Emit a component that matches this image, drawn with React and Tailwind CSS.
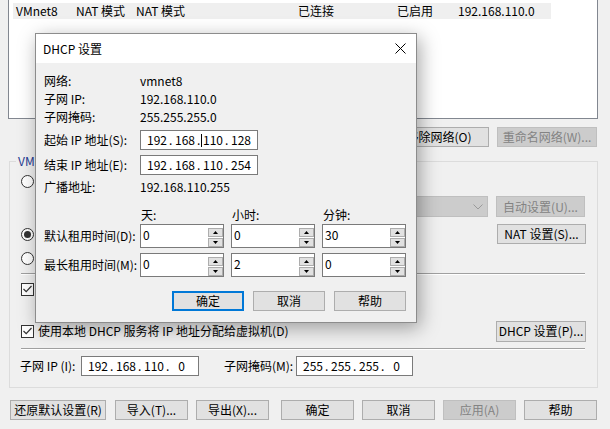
import React from "react";

function Btn({ children, className = "", disabled = false, def = false }) {
  const look = disabled
    ? "bg-[#cccccc] border border-[#bfbfbf] text-[#838383]"
    : def
    ? "bg-[#e1e1e1] border-2 border-[#0078d7]"
    : "bg-[#e1e1e1] border border-[#adadad]";
  return (
    <div className={`flex items-center justify-center h-[20px] shrink-0 whitespace-nowrap overflow-hidden ${look} ${className}`}>
      {children}
    </div>
  );
}

function IpField({ parts, className = "", caretAfter = -1 }) {
  return (
    <div className={`flex items-center h-[20px] shrink-0 bg-white border border-[#7a7a7a] pl-[6px] ${className}`}>
      {parts.map((p, i) => (
        <React.Fragment key={i}>
          <span className="w-[19px] shrink-0 text-center">{p}</span>
          {i < 3 && (
            <span className="w-[9px] shrink-0 flex items-center pl-[3px]">
              <span>.</span>
              {caretAfter === i && <span className="ml-[1px] w-px h-[13px] bg-black" />}
            </span>
          )}
        </React.Fragment>
      ))}
    </div>
  );
}

function Arrow({ up }) {
  return (
    <svg width="5" height="3" viewBox="0 0 5 3">
      <polygon points={up ? "0,3 5,3 2.5,0" : "0,0 5,0 2.5,3"} fill="#000" />
    </svg>
  );
}

function Spin({ v }) {
  return (
    <div className="flex shrink-0 w-[84px] h-[24px] border border-[#7a7a7a] bg-white">
      <div className="w-[67px] pl-[2px] pt-[2px] leading-[16px]">{v}</div>
      <div className="flex flex-col justify-end gap-[1px] w-[15px]">
        <div className="h-[9px] w-[15px] bg-[#e1e1e1] border border-[#adadad] flex items-center justify-center">
          <Arrow up />
        </div>
        <div className="h-[9px] w-[15px] bg-[#e1e1e1] border border-[#adadad] flex items-center justify-center">
          <Arrow />
        </div>
      </div>
    </div>
  );
}

function Radio({ checked = false }) {
  return (
    <div className="w-[13px] h-[13px] rounded-full border border-[#333333] bg-white flex items-center justify-center shrink-0">
      {checked && <div className="w-[7px] h-[7px] rounded-full bg-[#333333]" />}
    </div>
  );
}

function Check() {
  return (
    <div className="w-[13px] h-[13px] border border-[#333333] bg-white flex items-center justify-center shrink-0">
      <svg width="9" height="8" viewBox="0 0 9 8">
        <polyline points="0.5,4 3.2,6.7 8.5,1" fill="none" stroke="#333333" strokeWidth="1.2" />
      </svg>
    </div>
  );
}

function Etched({ className = "" }) {
  return (
    <div className={`h-[2px] flex flex-col ${className}`}>
      <div className="h-px bg-[#a0a0a0]" />
      <div className="h-px bg-white" />
    </div>
  );
}

export default function App() {
  return (
    <div className="relative w-[610px] h-[429px] overflow-hidden bg-[#f0f0f0] text-[12px] leading-[16px] text-black font-['Noto_Sans_CJK_SC',sans-serif]">
      {/* list box */}
      <div className="ml-[8px] w-[590px] h-[119px] bg-white border-x border-b border-[#828790] pt-[3px] pl-[4px]">
        <div className="w-[538px] h-[16px] bg-[#efefef] flex items-center pl-[3px] whitespace-nowrap">
          <span className="w-[60px]">VMnet8</span>
          <span className="w-[60px]">NAT 模式</span>
          <span className="w-[162px]">NAT 模式</span>
          <span className="w-[99px]">已连接</span>
          <span className="w-[61px]">已启用</span>
          <span>192.168.110.0</span>
        </div>
      </div>

      {/* list buttons */}
      <div className="mt-[8px] flex justify-end gap-[8px] pr-[13px]">
        <Btn className="w-[100px]">移除网络(O)</Btn>
        <Btn className="w-[100px]" disabled>重命名网络(W)...</Btn>
      </div>

      {/* group box */}
      <div className="relative mt-[14px] ml-[9px] w-[589px] h-[227px] border border-[#dcdcdc] pl-[11px] pr-[11px] pt-[9px]">
        <div className="absolute left-[6px] top-[-9px] w-[22px] overflow-hidden whitespace-nowrap px-[2px] bg-[#f0f0f0] text-[#1f3a93]">VMnet</div>

        <div className="h-[20px] flex items-center">
          <Radio />
        </div>

        <div className="mt-[5px] h-[21px] flex items-center">
          <div className="w-[97px] shrink-0" />
          <div className="w-[370px] shrink-0 h-[21px] bg-[#cccccc] border border-[#bfbfbf] flex items-center justify-end pr-[4px]">
            <svg width="10" height="6" viewBox="0 0 10 6">
              <polyline points="0.5,0.5 5,5 9.5,0.5" fill="none" stroke="#9a9a9a" strokeWidth="1" />
            </svg>
          </div>
          <Btn disabled className="ml-[8px] w-[89px] h-[21px]">自动设置(U)...</Btn>
        </div>

        <div className="mt-[7px] h-[20px] flex items-center">
          <Radio checked />
          <div className="flex-1" />
          <Btn className="w-[89px]">NAT 设置(S)...</Btn>
        </div>

        <div className="mt-[4px] h-[20px] flex items-center">
          <Radio />
        </div>

        <Etched className="mt-[5px] mr-[1px]" />

        <div className="mt-[4px] h-[20px] flex items-center">
          <Check />
        </div>

        <div className="h-[22px]" />

        <div className="h-[20px] flex items-center whitespace-nowrap">
          <Check />
          <span className="ml-[4px]">使用本地 DHCP 服务将 IP 地址分配给虚拟机(D)</span>
          <div className="flex-1" />
          <Btn className="w-[90px] h-[21px]">DHCP 设置(P)...</Btn>
        </div>

        <Etched className="mt-[7px] mr-[1px]" />

        <div className="mt-[6px] h-[20px] flex items-center whitespace-nowrap">
          <span className="-ml-[1px] w-[61px] shrink-0">子网 IP (I):</span>
          <IpField parts={["192", "168", "110", "0"]} className="w-[118px]" />
          <span className="ml-[25px] w-[72px] shrink-0">子网掩码(M):</span>
          <IpField parts={["255", "255", "255", "0"]} className="w-[117px]" />
        </div>
      </div>

      {/* bottom buttons */}
      <div className="mt-[12px] pl-[10px] flex items-center">
        <Btn className="w-[96px]">还原默认设置(R)</Btn>
        <Btn className="ml-[9px] w-[73px]">导入(T)...</Btn>
        <Btn className="ml-[8px] w-[73px]">导出(X)...</Btn>
        <Btn className="ml-[12px] w-[73px]">确定</Btn>
        <Btn className="ml-[8px] w-[73px]">取消</Btn>
        <Btn disabled className="ml-[8px] w-[73px]">应用(A)</Btn>
        <Btn className="ml-[8px] w-[73px]">帮助</Btn>
      </div>

      {/* DHCP dialog */}
      <div className="absolute left-[35px] top-[33px] w-[382px] h-[290px] border border-[#8c8c8c] bg-[#f0f0f0] shadow-[3px_5px_18px_rgba(0,0,0,0.35)] flex flex-col">
        <div className="h-[29px] bg-white flex items-center justify-between pl-[7px] pr-[10px]">
          <span>DHCP 设置</span>
          <svg width="11" height="11" viewBox="0 0 11 11">
            <line x1="0.5" y1="0.5" x2="10.5" y2="10.5" stroke="#000" strokeWidth="1" />
            <line x1="10.5" y1="0.5" x2="0.5" y2="10.5" stroke="#000" strokeWidth="1" />
          </svg>
        </div>

        <div className="flex-1 pl-[8px] pr-[8px] pt-[9px]">
          <div className="h-[18px] flex items-center">
            <span className="w-[96px] shrink-0">网络:</span>
            <span>vmnet8</span>
          </div>
          <div className="h-[18px] flex items-center">
            <span className="w-[96px] shrink-0">子网 IP:</span>
            <span>192.168.110.0</span>
          </div>
          <div className="h-[18px] flex items-center">
            <span className="w-[96px] shrink-0">子网掩码:</span>
            <span>255.255.255.0</span>
          </div>
          <div className="mt-[4px] h-[20px] flex items-center">
            <span className="w-[96px] shrink-0">起始 IP 地址(S):</span>
            <IpField parts={["192", "168", "110", "128"]} className="w-[118px]" caretAfter={1} />
          </div>
          <div className="mt-[5px] h-[20px] flex items-center">
            <span className="w-[96px] shrink-0">结束 IP 地址(E):</span>
            <IpField parts={["192", "168", "110", "254"]} className="w-[118px]" />
          </div>
          <div className="mt-[3px] h-[18px] flex items-center">
            <span className="w-[96px] shrink-0">广播地址:</span>
            <span>192.168.110.255</span>
          </div>

          <div className="mt-[11px] h-[16px] flex items-center pl-[97px]">
            <span className="w-[91px] shrink-0">天:</span>
            <span className="w-[91px] shrink-0">小时:</span>
            <span>分钟:</span>
          </div>
          <div className="mt-[1px] flex items-center">
            <span className="w-[96px] shrink-0 whitespace-nowrap">默认租用时间(D):</span>
            <div className="flex shrink-0 gap-[7px]">
              <Spin v="0" />
              <Spin v="0" />
              <Spin v="30" />
            </div>
          </div>
          <div className="mt-[5px] flex items-center">
            <span className="w-[96px] shrink-0 whitespace-nowrap">最长租用时间(M):</span>
            <div className="flex shrink-0 gap-[7px]">
              <Spin v="0" />
              <Spin v="2" />
              <Spin v="0" />
            </div>
          </div>

          <div className="mt-[14px] flex justify-end gap-[9px] pr-[2px]">
            <Btn def className="w-[72px]">确定</Btn>
            <Btn className="w-[72px]">取消</Btn>
            <Btn className="w-[72px]">帮助</Btn>
          </div>
        </div>
      </div>
    </div>
  );
}
